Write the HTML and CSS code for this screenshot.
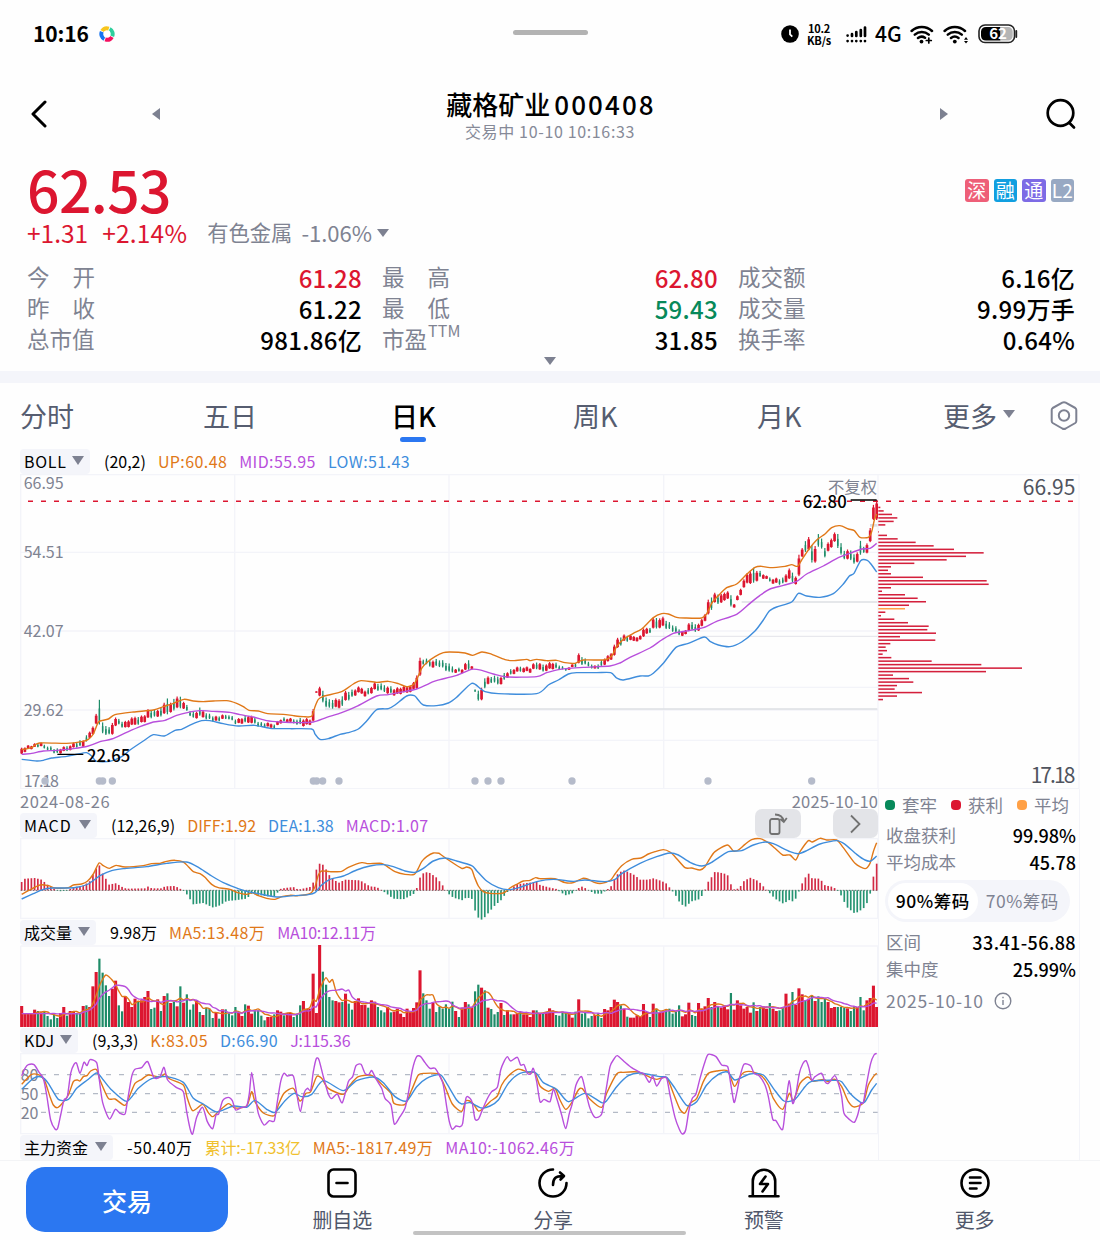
FILE: index.html
```
<!DOCTYPE html>
<html lang="zh-CN">
<head>
    <meta charset="UTF-8">
    <meta name="viewport" content="width=device-width, initial-scale=1.0">
    <title>藏格矿业 000408</title>
    <link rel="stylesheet" href="styles.css">
</head>
<body>

    <header class="status-bar">
        <span class="time">10:16</span>
        <svg class="app-dot" width="16" height="16" viewBox="-8 -8 16 16" fill="none" stroke-width="4">
            <path d="M-4.9 -2.9A5.7 5.7 0 0 1 1.8 -5.4" stroke="#f8c51c"/>
            <path d="M2.6 -5A5.7 5.7 0 0 1 5.2 2.3" stroke="#2fcf9d"/>
            <path d="M4.9 2.9A5.7 5.7 0 0 1 -1.8 5.4" stroke="#f5105f"/>
            <path d="M-2.6 5A5.7 5.7 0 0 1 -5.2 -2.3" stroke="#1673f0"/>
            <path d="M-2.5 -3L2.8 -3.2L3 2.5L-2.6 3.3Z" fill="#fff" stroke="none"/>
        </svg>
        <span class="notch"></span>
        <div class="status-icons">
            <svg width="18" height="18" viewBox="0 0 18 18">
                <circle cx="9" cy="9" r="8.8"/>
                <path d="M9 4.5V9.3L11.3 11.6" fill="none" stroke="#fff" stroke-width="1.8"/>
            </svg>
            <span class="speed">10.2<br>KB/s</span>
            <svg class="signal" width="21" height="17" viewBox="0 0 21 17">
                <g stroke="#000" stroke-width="2.7" stroke-linecap="round">
                    <path d="M1.6 9.5V9.6M6 8.2V10M10.3 6V10M14.8 4V10M19 1.6V10"/>
                    <path d="M1.6 15V15.1M6 15V15.1M10.3 15V15.1M14.8 15V15.1M19 15V15.1"/>
                </g>
            </svg>
            <span class="network">4G</span>
            <svg class="wifi" width="24" height="19" viewBox="0 0 24 19" fill="none" stroke="#000" stroke-width="2.5" stroke-linecap="round">
                <path d="M1.6 6A15 15 0 0 1 22 6M4.8 9.6A10.5 10.5 0 0 1 18.8 9.6M8 13A6 6 0 0 1 15 12.8"/>
                <circle cx="11.5" cy="16.6" r="1.9" fill="#000" stroke="none"/>
                <path d="M18.8 13V18M16.3 15.5H21.3" stroke-width="1.7"/>
            </svg>
            <svg class="wifi" width="26" height="19" viewBox="0 0 26 19" fill="none" stroke="#000" stroke-width="2.5" stroke-linecap="round">
                <path d="M1.6 6A15 15 0 0 1 22 6M4.8 9.6A10.5 10.5 0 0 1 18.8 9.6M8 13A6 6 0 0 1 15.5 13"/>
                <circle cx="11.8" cy="16.6" r="1.9" fill="#000" stroke="none"/>
                <path d="M23 12L25 14.7H21ZM23 18.6L25 16H21Z" fill="#000" stroke="none"/>
            </svg>
            <svg class="battery" width="40" height="20" viewBox="0 0 40 20">
                <rect x="1" y="1" width="35.5" height="17.5" rx="6" fill="#fff" stroke="#222" stroke-width="1.6"/>
                <path d="M8 3H22.5V16.5H8A5 5 0 0 1 3 12V7.5A5 5 0 0 1 8 3Z"/>
                <path d="M22.5 3H30A4.5 4.5 0 0 1 34.7 7.5V12A4.5 4.5 0 0 1 30 16.5H22.5Z" fill="#b5b5b5"/>
                <path d="M38.3 7V13" stroke="#222" stroke-width="1.8" stroke-linecap="round"/>
                <text x="20" y="15" class="battery-text">62</text>
            </svg>
        </div>
    </header>

    <nav class="title-bar">
        <svg class="back" width="18" height="28" viewBox="0 0 18 28"><path d="M15 2L3 14L15 26"/></svg>
        <i class="tri-left"></i>
        <div class="title">
            <h1>藏格矿业<b>000408</b></h1>
            <p>交易中 10-10 10:16:33</p>
        </div>
        <i class="tri-right"></i>
        <svg class="search" width="32" height="32" viewBox="0 0 32 32"><circle cx="15.5" cy="15" r="12.8"/><path d="M24.5 25L29 29.5"/></svg>
    </nav>

    <section class="quote">
        <div class="price-row">
            <span class="price">62.53</span>
            <div class="badges">
                <span class="badge shen">深</span>
                <span class="badge rong">融</span>
                <span class="badge tong">通</span>
                <span class="badge l2">L2</span>
            </div>
        </div>
        <div class="change-row">
            <span class="red">+1.31</span>
            <span class="red pct">+2.14%</span>
            <span class="industry">有色金属</span>
            <span class="industry-pct">-1.06%</span>
            <i class="tri-down"></i>
        </div>
        <div class="stats">
            <div><label>今<s></s>开</label><span class="red">61.28</span></div>
            <div><label>最<s></s>高</label><span class="red">62.80</span></div>
            <div><label>成交额</label><span>6.16亿</span></div>
            <div><label>昨<s></s>收</label><span>61.22</span></div>
            <div><label>最<s></s>低</label><span class="green">59.43</span></div>
            <div><label>成交量</label><span>9.99万手</span></div>
            <div><label>总市值</label><span>981.86亿</span></div>
            <div><label>市盈<sup>TTM</sup></label><span>31.85</span></div>
            <div><label>换手率</label><span>0.64%</span></div>
        </div>
        <i class="tri-down expand"></i>
    </section>

    <div class="tabs">
        <span>分时</span>
        <span>五日</span>
        <span class="active">日K</span>
        <span>周K</span>
        <span>月K</span>
        <span class="more">更多<i class="tri-down"></i></span>
        <svg class="settings" width="30" height="32" viewBox="0 0 30 32"><path d="M13.3 2.7Q15 1.8 16.7 2.7L26.3 8Q27.3 8.7 27.3 10V21Q27.3 22.3 26.3 23L16.7 28.5Q15 29.4 13.3 28.5L3.7 23Q2.7 22.3 2.7 21V10Q2.7 8.7 3.7 8Z"/><circle cx="15" cy="15.5" r="5.2"/></svg>
    </div>

    <main class="charts">
        <div class="indicator">
            <span class="select boll">BOLL<i class="tri-down"></i></span>
            <span class="param">(20,2)</span>
            <span class="orange loose">UP:60.48</span>
            <span class="purple loose">MID:55.95</span>
            <span class="blue loose">LOW:51.43</span>
        </div>

        <svg class="kline" id="kline" viewBox="60 282 3180 945">
            <g class="grid">
                <path d="M62 284H3237V1226H62ZM704 284V1226M1347 284V1226M1991 284V1226M2634 284V1226"/>
                <path d="M62 517H2634M62 753H2634M62 990H2634M300 1081H2634M1420 922H2634"/>
            </g>
            <g class="gaps">
                <path d="M975 987H2632M2225 666H2632" stroke-width="4.5"/>
                <path d="M1930 769H2632" stroke-width="2.5"/>
                <path d="M2610 436H2632" stroke-width="8"/>
            </g>
            <g class="axis">
                <text x="71" y="328">66.95</text>
                <text x="71" y="534">54.51</text>
                <text x="71" y="771">42.07</text>
                <text x="71" y="1008">29.62</text>
                <text x="71" y="1221" textLength="106">17.18</text>
            </g>
            <g id="events" class="events"></g>
            <g id="candles"></g>
            <g id="boll"></g>
            <path class="last-price" d="M84 364H3222"/>
            <g id="chips"></g>
            <text class="adjust" x="2631" y="339">不复权</text>
            <path class="pointer" d="M2552 360H2630M172 1123H250"/>
            <text class="extreme" x="2408" y="383" textLength="132">62.80</text>
            <text class="extreme" x="261" y="1146" textLength="130">22.65</text>
            <text class="range" x="3226" y="345">66.95</text>
            <text class="range" x="3226" y="1209" textLength="134">17.18</text>
        </svg>

        <div class="lower">
            <div class="left">
                <div class="dates"><span>2024-08-26</span><span class="end">2025-10-10</span></div>
                <div class="indicator macd-row">
                    <span class="select macd">MACD<i class="tri-down"></i></span>
                    <span class="param">(12,26,9)</span>
                    <span class="orange">DIFF:1.92</span>
                    <span class="blue">DEA:1.38</span>
                    <span class="purple loose">MACD:1.07</span>
                    <div class="tools">
                        <button>
                            <svg width="20" height="22" viewBox="0 0 20 22"><rect x="2" y="6" width="9.5" height="15" rx="2"/><path d="M7 1.5C12 1.5 15 4 15.8 8.5M12.3 6L15.8 9L18.8 5"/></svg>
                        </button>
                        <button>
                            <svg width="14" height="20" viewBox="0 0 14 20"><path d="M3 1.5L11.5 10L3 18.5"/></svg>
                        </button>
                    </div>
                </div>
                <svg class="pane pane-macd" viewBox="60 114 2574 243">
                    <path class="grid" d="M62 116H2633V355H62ZM704 116V355M1347 116V355M1991 116V355"/>
                    <path class="zero" d="M62 271H2633"/>
                    <g id="macd"></g>
                </svg>

                <div class="indicator">
                    <span class="select vol">成交量<i class="tri-down"></i></span>
                    <span class="param">9.98万</span>
                    <span class="orange loose">MA5:13.48万</span>
                    <span class="purple tight">MA10:12.11万</span>
                </div>
                <svg class="pane pane-vol" viewBox="60 435 2574 246">
                    <path class="grid" d="M62 438H2633V681M62 438V681M704 438V681M1347 438V681M1991 438V681"/>
                    <g id="volume"></g>
                </svg>

                <div class="indicator">
                    <span class="select kdj">KDJ<i class="tri-down"></i></span>
                    <span class="param">(9,3,3)</span>
                    <span class="orange loose">K:83.05</span>
                    <span class="blue loose">D:66.90</span>
                    <span class="purple tight">J:115.36</span>
                </div>
                <svg class="pane pane-kdj" viewBox="60 69 2574 243">
                    <path class="grid" d="M62 71H2633V311H62ZM704 71V311M1347 71V311M1991 71V311"/>
                    <path class="levels" d="M123 134H2633M123 191H2633M123 247H2633"/>
                    <g class="axis">
                        <text x="62" y="154">80</text>
                        <text x="62" y="209">50</text>
                        <text x="62" y="266">20</text>
                    </g>
                    <g id="kdj"></g>
                </svg>

                <div class="indicator">
                    <span class="select fund">主力资金<i class="tri-down"></i></span>
                    <span class="param looser">-50.40万</span>
                    <span class="yellow tight">累计:-17.33亿</span>
                    <span class="orange loose">MA5:-1817.49万</span>
                    <span class="purple loose">MA10:-1062.46万</span>
                </div>
            </div>

            <aside class="chips">
                <div class="legend">
                    <span class="k-green">套牢</span>
                    <span class="k-red">获利</span>
                    <span class="k-orange">平均</span>
                </div>
                <div class="line"><span>收盘获利</span><b>99.98%</b></div>
                <div class="line"><span>平均成本</span><b>45.78</b></div>
                <div class="toggle"><span class="on">90%筹码</span><span>70%筹码</span></div>
                <div class="line"><span>区间</span><b class="span">33.41-56.88</b></div>
                <div class="line"><span>集中度</span><b>25.99%</b></div>
                <div class="chip-date">2025-10-10
                    <svg width="18" height="18" viewBox="0 0 18 18"><circle cx="9" cy="9" r="7.8"/><path d="M9 8V13M9 4.8V6.2"/></svg>
                </div>
            </aside>
        </div>
    </main>

    <footer class="bottom-bar">
        <button class="trade">交易</button>
        <div class="actions">
            <div>
                <svg width="32" height="32" viewBox="0 0 32 32"><rect x="2.5" y="2.5" width="27" height="27" rx="5"/><path d="M10.5 16H21.5"/></svg>
                <span>删自选</span>
            </div>
            <div>
                <svg width="32" height="32" viewBox="0 0 32 32"><path d="M16 2.5A13.5 13.5 0 1 0 29.5 16M16 18C16 11.5 18.5 9 26 9M23 5.5L27 9L23.5 12.5"/></svg>
                <span>分享</span>
            </div>
            <div>
                <svg width="32" height="32" viewBox="0 0 32 32"><path d="M1.5 29.3H30.5M4.8 29V14A11.2 11.2 0 0 1 27.2 14V29M17.5 9.5L12 17H20L14.5 24.5"/></svg>
                <span>预警</span>
            </div>
            <div>
                <svg width="32" height="32" viewBox="0 0 32 32"><circle cx="16" cy="16" r="13.5"/><path d="M11 10.5H21.5M11 16H21.5M11 21.5H17.5"/></svg>
                <span>更多</span>
            </div>
        </div>
        <span class="home-bar"></span>
    </footer>

    <script src="script.js"></script>
</body>
</html>
```
FILE: styles.css
```
* {
    box-sizing: border-box;
}
body {
    margin: 0;
    width: 1100px;
    height: 1240px;
    overflow: hidden;
    display: flex;
    flex-direction: column;
    position: relative;
    background: #fefefe;
    color: #000;
    font-family: "Noto Sans CJK SC", "Noto Sans", sans-serif;
    line-height: 1;
}
h1, p {
    margin: 0;
}
button {
    border: none;
    padding: 0;
    font-family: inherit;
}
.red { color: #dc1630; }
.green { color: #07895a; }
.orange { color: #e07818; }
.purple { color: #b84fdc; }
.blue { color: #3f8ddc; }
.yellow { color: #f0c02c; }

/* small triangles */
.tri-down {
    display: inline-block;
    border: 6px solid transparent;
    border-top: 8px solid #7d8191;
    border-bottom: 0;
}
.tri-left, .tri-right {
    border: 6px solid transparent;
}
.tri-left {
    border-right: 8px solid #7d8191;
    border-left: 0;
    margin-left: 104px;
}
.tri-right {
    border-left: 8px solid #7d8191;
    border-right: 0;
    margin-right: 97px;
}

/* Status bar */
.status-bar {
    height: 68px;
    padding: 0 82px 0 33px;
    display: flex;
    align-items: center;
    flex: none;
}
.time {
    font-size: 21px;
    font-weight: 700;
    width: 66px;
    letter-spacing: -0.1px;
    padding-bottom: 1px;
}
.notch {
    width: 75px;
    height: 5px;
    border-radius: 3px;
    background: #b3b3b3;
    margin: -4px 0 0 398px;
}
.status-icons {
    margin-left: auto;
    display: flex;
    align-items: center;
}
.speed {
    width: 26px;
    margin: -1px 14px 0 7px;
    text-align: center;
    font-size: 11px;
    line-height: 12px;
    font-weight: 700;
    letter-spacing: -0.2px;
    white-space: nowrap;
}
.network {
    font-size: 21px;
    font-weight: 500;
    width: 28px;
    margin: -1px 7px 0 8px;
}
.wifi {
    margin-right: 9px;
}
.battery-text {
    font-size: 15px;
    font-weight: 700;
    fill: #fff;
    text-anchor: middle;
}

/* Title */
.title-bar {
    height: 92px;
    padding: 0 23px 0 30px;
    display: flex;
    align-items: center;
    flex: none;
}
.back path, .search {
    fill: none;
    stroke: #000;
    stroke-width: 3;
    stroke-linecap: round;
    stroke-linejoin: round;
}
.search {
    stroke-width: 2.7;
}
.title {
    flex: 1;
    text-align: center;
    padding-top: 4px;
}
.title h1 {
    font-size: 26px;
    line-height: 30px;
    font-weight: 500;
}
.title b {
    font-weight: 500;
    font-size: 26px;
    letter-spacing: 2.1px;
    margin: 0 -2px 0 4px;
}
.title p {
    font-size: 16px;
    line-height: 24px;
    letter-spacing: 0.65px;
    color: #868a98;
}

/* Quote */
.quote {
    height: 211px;
    padding: 0 26px 0 27px;
    flex: none;
    position: relative;
}
.price-row {
    height: 60px;
    display: flex;
    align-items: center;
    justify-content: space-between;
}
.price {
    font-size: 57px;
    line-height: 54px;
    letter-spacing: -0.6px;
    font-weight: 500;
    color: #dc1630;
    padding-bottom: 5px;
}
.badges {
    display: flex;
    gap: 5px;
}
.badge {
    width: 23.5px;
    height: 23px;
    border-radius: 3px;
    color: #fff;
    font-size: 19px;
    line-height: 21px;
    text-align: center;
}
.shen { background: #ee5f78; }
.rong { background: #119fe0; }
.tong { background: #7d6be5; }
.l2 { background: #98a9c3; }
.change-row {
    height: 28px;
    padding-bottom: 2px;
    display: flex;
    align-items: center;
    font-size: 24.5px;
}
.pct {
    margin-left: 14px;
    letter-spacing: 0.2px;
}
.industry {
    font-size: 21.3px;
    color: #7f8392;
    margin: -2px 0 0 20px;
}
.industry-pct {
    font-size: 22px;
    color: #7f8392;
    margin: -2px 5px 0 9px;
}
.stats {
    margin-top: 14px;
    display: grid;
    grid-template-columns: 335px 336px 337px;
    column-gap: 20px;
    grid-auto-rows: 31px;
}
.stats div {
    display: flex;
    justify-content: space-between;
    align-items: center;
}
.stats label {
    font-size: 22.5px;
    color: #7f8392;
    margin-top: -2px;
}
.stats s {
    display: inline-block;
    width: 23px;
}
.stats sup {
    font-size: 16px;
    line-height: 0;
    vertical-align: 11px;
    letter-spacing: 0.2px;
    margin-left: 1px;
}
.stats span {
    font-size: 24px;
    font-weight: 500;
    letter-spacing: 0.3px;
}
.expand {
    position: absolute;
    left: 544px;
    bottom: 6px;
}

/* Period tabs */
.tabs {
    height: 78px;
    border-top: 12px solid #f4f5fa;
    padding: 0 0 2px 20px;
    display: grid;
    grid-template-columns: 183px 188px 182px 184px 186px 106px 30px;
    align-items: center;
    flex: none;
    font-size: 27px;
    color: #565d70;
}
.tabs .active {
    color: #000;
    font-weight: 500;
    position: relative;
}
.active::after {
    content: "";
    position: absolute;
    left: 9px;
    bottom: -13px;
    width: 26px;
    height: 5px;
    border-radius: 3px;
    background: #2b77f1;
}
.more .tri-down {
    margin: 0 0 0 6px;
    vertical-align: 9px;
}
.settings {
    fill: none;
    stroke: #7d8191;
    stroke-width: 2;
    stroke-linejoin: round;
    margin-top: 1px;
}

/* Charts */
.charts {
    padding-left: 20px;
    height: 711px;
    flex: none;
    overflow: hidden;
}
svg {
    display: block;
}
.indicator {
    height: 25px;
    display: flex;
    align-items: center;
    font-size: 16px;
    line-height: 25px;
    white-space: nowrap;
    position: relative;
}
.indicator span {
    margin-right: 12px;
}
.indicator .loose {
    letter-spacing: 0.4px;
}
.indicator .looser {
    letter-spacing: 0.6px;
}
.indicator .tight {
    letter-spacing: -0.2px;
}
.indicator .select {
    background: #f4f5fa;
    border-radius: 4px;
    height: 25px;
    padding: 0 6px 0 4px;
    margin-right: 14px;
    display: flex;
    align-items: center;
    justify-content: space-between;
}
.select .tri-down {
    margin-bottom: 3px;
    border-top-width: 9px;
}
.select.boll { width: 70px; letter-spacing: 0.7px; }
.select.macd { width: 77px; letter-spacing: 1px; }
.select.vol { width: 76px; }
.select.kdj { width: 58px; letter-spacing: 0.4px; }
.select.fund { width: 93px; }
.kline {
    width: 1060px;
    height: 315px;
}
.grid {
    fill: none;
    stroke: #f3f4f9;
    stroke-width: 4;
}
.gaps {
    stroke: #dddfe4;
}
.axis text {
    font-size: 48px;
    fill: #7f8392;
}
.last-price {
    stroke: #dc1630;
    stroke-width: 4.5;
    stroke-dasharray: 15 24;
}
.events {
    fill: #b5bbca;
}
.adjust {
    font-size: 49px;
    fill: #7f8392;
    text-anchor: end;
}
.pointer {
    stroke: #000;
    stroke-width: 4;
}
.extreme {
    font-size: 50px;
    font-weight: 500;
}
.range {
    font-size: 63px;
    fill: #50545e;
    text-anchor: end;
}
.lower {
    display: flex;
}
.left {
    width: 858px;
}
.dates {
    height: 24px;
    padding-top: 4px;
    display: flex;
    justify-content: space-between;
    font-size: 16.5px;
    letter-spacing: 0.55px;
    color: #7f8392;
}
.dates .end {
    letter-spacing: 0.15px;
}
.tools {
    position: absolute;
    right: 0;
    top: -4px;
    display: flex;
    gap: 32px;
}
.tools button {
    width: 45.5px;
    height: 29px;
    border-radius: 7px;
    background: rgba(222, 223, 228, 0.85);
    display: flex;
    align-items: center;
    justify-content: center;
}
.tools svg {
    fill: none;
    stroke: #727272;
    stroke-width: 1.8;
}
.pane {
    width: 858px;
    overflow: visible;
}
.pane-macd {
    height: 81px;
    margin-bottom: 1px;
}
.pane-vol {
    height: 82px;
    margin-bottom: 1px;
}
.pane-kdj {
    height: 81px;
    margin-bottom: 1px;
}
.zero {
    stroke: #444;
    stroke-width: 2.5;
    stroke-dasharray: 5 4;
}
.levels {
    stroke: #b4bac6;
    stroke-width: 4;
    stroke-dasharray: 15 24;
}

/* Chip distribution */
.chips {
    width: 202px;
    height: 371px;
    padding: 0 3px 0 7px;
    border-left: 1px solid #f3f4f9;
    border-right: 1px solid #f3f4f9;
    font-size: 17.5px;
    color: #7f8392;
}
.legend {
    height: 32px;
    display: flex;
    align-items: center;
    gap: 15px;
}
.legend span::before {
    content: "";
    display: inline-block;
    width: 10px;
    height: 10px;
    border-radius: 4px;
    margin: 0 7px 2px -1px;
}
.legend .k-green::before { background: #07895a; }
.legend .k-red::before { background: #dc1630; }
.legend .k-orange::before { background: #ffa046; }
.line {
    height: 27px;
    display: flex;
    align-items: center;
    justify-content: space-between;
}
.line b {
    color: #000;
    font-weight: 500;
    font-size: 18px;
}
.line .span {
    letter-spacing: 0.4px;
}
.toggle {
    width: 185px;
    height: 42px;
    margin: 5px 0 6px -1px;
    padding: 3px;
    border-radius: 21px;
    background: #f4f5fa;
    display: flex;
}
.toggle span {
    width: 90px;
    height: 36px;
    line-height: 36px;
    letter-spacing: 0.5px;
    text-align: center;
    border-radius: 18px;
}
.toggle .on {
    background: #fff;
    color: #000;
    font-weight: 500;
}
.chip-date {
    height: 37px;
    display: flex;
    align-items: center;
    gap: 10px;
    letter-spacing: 0.8px;
}
.chip-date svg {
    fill: none;
    stroke: #7f8392;
    stroke-width: 1.4;
}

/* Bottom bar */
.bottom-bar {
    height: 80px;
    border-top: 1px solid #f3f4f6;
    padding: 6px 20px 0 26px;
    display: flex;
    position: relative;
}
.trade {
    width: 202px;
    height: 65px;
    border-radius: 19px;
    background: #2b77f1;
    color: #fff;
    font-size: 25px;
    font-weight: 500;
}
.actions {
    flex: 1;
    margin-left: 9px;
    display: flex;
}
.actions div {
    flex: 1;
    display: flex;
    flex-direction: column;
    align-items: center;
}
.actions svg {
    fill: none;
    stroke: #000;
    stroke-width: 2.6;
    stroke-linecap: round;
    stroke-linejoin: round;
}
.actions span {
    font-size: 20px;
    line-height: 24px;
    margin-top: 9px;
    color: #50576b;
}
.home-bar {
    position: absolute;
    left: 413px;
    bottom: 5px;
    width: 273px;
    height: 4px;
    border-radius: 2px;
    background: #c2c2c2;
}
```
FILE: script.js
```
const NS = "http://www.w3.org/2000/svg";
const COLORS = { r: "#dc1630", g: "#1e8c68", orange: "#e07818", purple: "#b84fdc", blue: "#3f8ddc" };
const HALF = 1320;

function add(parent, tag, attrs) {
    const el = document.createElementNS(NS, tag);
    for (const key in attrs) el.setAttribute(key, attrs[key]);
    document.getElementById(parent).appendChild(el);
}

// "x,y x,y ..." -> [[x, y], ...], optionally moved to the right half of the pane
function parse(text, dx = 0) {
    return text.trim().split(/\s+/).map(p => {
        const v = p.split(",").map(Number);
        v[0] += dx;
        return v;
    });
}

function both(left, right) {
    const b = parse(right, HALF);
    return parse(left).filter(p => p[0] < b[0][0]).concat(b);
}

// smooth path through the points, tension kept low
function line(parent, pts, color, width = 4.2) {
    let d = `M${pts[0][0]} ${pts[0][1]}`;
    for (let i = 1; i < pts.length; i++) {
        const a = pts[i - 2] || pts[i - 1], b = pts[i - 1], c = pts[i], e = pts[i + 1] || c;
        d += `C${b[0] + (c[0] - a[0]) / 8} ${b[1] + (c[1] - a[1]) / 8} ${c[0] - (e[0] - b[0]) / 8} ${c[1] - (e[1] - b[1]) / 8} ${c[0]} ${c[1]}`;
    }
    add(parent, "path", { d, fill: "none", stroke: COLORS[color], "stroke-width": width, "stroke-linejoin": "round" });
}

function at(pts, x, col = 1) {
    if (x <= pts[0][0]) return pts[0][col];
    for (let i = 1; i < pts.length; i++) {
        if (x <= pts[i][0]) {
            const t = (x - pts[i - 1][0]) / (pts[i][0] - pts[i - 1][0]);
            return pts[i - 1][col] + t * (pts[i][col] - pts[i - 1][col]);
        }
    }
    return pts[pts.length - 1][col];
}

/* Volume: bar height + up/down for each trading day */
const volume = `63r 41r 41r 41r 52r 48g 44r 48g 33g 23g 37g 27g 42r 60r 34g 48r 48r 42g 42g 63r 65g 60r 122r 165r 205g 163g 125g 93g 115r 139r
65g 47g 92r 75r 60r 85r 75g 80r 90r 108r 54g 58g 83r 48g 93r 101g 72r 75g 62r 122g 73r 98g 52g 68g 80r 45g 36r 58g 55g 27g
43r 25g 53r 53g 41g 35g 60g 42r 33r 68g 64r 40r 50g 50g 34g 20g 30r 30r 38g 50r 46r 35g 42r 42r 30g 40g 65g 78r 55r 55r
160r 42r 246r 166g 127g 90g 80g 78r 74r 75g 100r 70g 52g 78r 86r 66r 66r 58g 80r 76r 60g 50g 44g 60r 44g 46r 55r 40r 30r 55r
45r 57r 74r 170r 101g 80g 55g 73r 45g 60g 55g 68g 55g 76g 48r 30g 58r 75r 68g 60r 107g 127g 118r 110g 58r 54g 38g 45g 72r 36g
50r 38g 38r 40r 45g 38r 38r 30r 50r 50g 40r 42g 45r 56r 50r 36g 34g 46g 42g 40r 28r 46g 83r 40g 42g 26g 33g 36r 40g 27g
54r 50r 60r 82r 75r 65g 55r 31g 28r 28r 35r 30r 69r 45r 30g 70r 55g 42r 46r 50g 55g 40g 45g 65g 32r 38r 73r 36g 33g 72r
55r 62r 87r 60g 75r 60g 58r 64r 53r 102g 52r 80r 65r 55r 60r 43r 74g 48r 60g 62r 55r 72g 55r 48r 50g 60g 100r 70r 105g 66r
116r 98r 80g 85r 95g 78r 92g 75g 85g 75r 57r 60r 60g 60g 58g 56r 48g 62g 60r 90g 50g 80r 87r 124r 60r`
    .split(/\s+/).map(v => ({ h: parseInt(v), c: v.slice(-1) }));
const STEP = 2565 / (volume.length - 1);
const barX = i => 65 + i * STEP;

volume.forEach((v, i) => {
    const w = v.c === "r" ? 9.2 : 6.6;
    add("volume", "rect", { x: barX(i) - w / 2, y: 681 - v.h, width: w, height: v.h, fill: COLORS[v.c] });
});
function average(n) {
    return volume.map((v, i) => {
        const part = volume.slice(Math.max(0, i - n + 1), i + 1);
        return [barX(i), 681 - (i < n ? 40 : part.reduce((s, p) => s + p.h, 0) / part.length)];
    });
}
line("volume", average(5), "orange");
line("volume", average(10), "purple");

/* Candles: x, high, low */
const range = parse(`65,1103,1122 85,1097,1107 118,1088,1100 140,1097,1108 175,1108,1122 205,1097,1112 230,1085,1100 250,1080,1100
265,1062,1080 280,1035,1060 290,998,1030 298,955,1030 308,1030,1062 328,1045,1066 342,1020,1063 347,1010,1035 358,1020,1035 375,1025,1045 405,1010,1035
430,1008,1028 445,988,1015 470,992,1012 490,975,1005 502,952,1000 513,972,1000 522,955,990 541,950,985 552,965,985 570,990,1005
583,1000,1018 600,985,1010 625,1002,1018 650,1010,1025 685,1003,1015 710,1018,1032 755,1005,1028 780,1028,1040 825,1032,1045
845,1013,1025 880,1018,1030 912,1015,1037 932,1018,1034 940,988,1027 949,934,938 959,918,947 969,935,970 985,960,985 1020,957,985
1035,935,965 1060,930,950 1080,920,938 1098,932,950 1125,908,930 1150,915,935 1165,918,940 1185,925,945 1225,918,938 1245,905,928
1250,885,925 1260,835,890 1270,838,852 1295,840,862 1320,838,858 1345,852,878 1367,865,877 1386,865,877 1405,838,868 1416,862,870
1425,928,935 1435,930,960 1445,925,963 1454,892,922 1474,890,908 1500,890,915 1525,872,888 1560,860,875 1590,862,876 1607,845,865
1625,855,876 1660,845,865 1695,866,873 1725,850,860 1736,822,852 1760,842,857 1785,858,868 1810,837,857 1832,823,842 1843,792,825
1853,775,805 1870,765,785 1920,770,782 1930,742,768 1948,748,760 1960,715,748 1990,712,740 2010,730,750 2040,750,767 2057,752,765
2067,725,750 2095,735,757 2115,700,722 2125,660,705 2143,640,670 2165,645,672 2182,630,652 2193,648,682 2203,670,680 2222,625,645
2240,580,610 2261,565,610 2281,575,592 2300,590,600 2320,595,610 2348,595,612 2368,568,600 2387,588,612 2397,525,590 2407,500,525
2426,470,510 2436,500,552 2446,498,548 2455,460,498 2465,478,508 2475,502,530 2485,488,515 2504,460,488 2514,462,505 2533,515,540
2543,505,535 2562,522,550 2572,520,550 2580,480,525 2592,502,518 2601,490,520 2611,442,485 2620,375,420 2630,360,420`);
volume.forEach((v, i) => {
    const x = barX(i), top = at(range, x), low = at(range, x, 2);
    const shift = i > 258 ? 0 : [0, 2, -2, 3, -2, 1, -3][i % 7];
    const len = low - top, body = len * (v.c === "r" ? 0.75 : 0.5);
    add("candles", "rect", { x: x - 1.8, y: top + shift, width: 3.6, height: len, fill: COLORS[v.c] });
    const w = v.c === "r" ? 8 : 4.5;
    add("candles", "rect", { x: x - w / 2, y: top + shift + (len - body) * 0.7, width: w, height: body, fill: COLORS[v.c] });
});

line("boll", parse(`65,1109 95,1103 118,1089 200,1090 245,1085 265,1078 280,1062 293,1030 300,1023 325,1017 345,1004 400,996 460,990
490,980 520,970 552,958 580,963 610,965 640,963 680,962 710,970 730,980 747,991 775,993 803,1001 850,1003 880,1007 910,1010 935,1009
945,980 955,958 970,949 1025,935 1060,912 1083,902 1130,907 1165,904 1195,911 1220,920 1240,914 1252,895 1265,865 1280,848 1305,830
1330,818 1350,816 1395,819 1418,826 1445,816 1470,821 1515,839 1540,842 1580,838 1590,842 1610,838 1640,842 1670,841 1695,848
1725,850 1750,840 1810,840 1830,833 1840,820 1850,800 1870,778 1900,760 1925,747 1960,713 1985,701 2005,702 2030,712 2055,714
2105,714 2120,702 2135,670 2155,647 2180,623 2210,612 2240,583 2265,562 2285,559 2310,563 2355,559 2375,554 2393,559 2405,540
2425,510 2450,480 2475,462 2495,443 2520,437 2545,447 2563,452 2580,472 2605,472 2615,455 2623,420 2630,402`), "orange");
line("boll", parse(`65,1123 95,1120 130,1113 170,1111 220,1106 265,1098 300,1085 335,1077 380,1057 420,1040 460,1026 495,1021 530,1006
565,997 600,992 640,994 690,997 720,1004 760,1011 800,1022 840,1026 900,1028 940,1026 980,1012 1025,998 1070,979 1130,948 1165,944
1200,937 1250,927 1300,905 1320,899 1370,886 1415,868 1445,871 1480,882 1520,891 1610,890 1640,878 1680,868 1750,862 1830,858
1860,849 1890,832 1950,804 1985,780 2020,760 2060,753 2110,743 2150,724 2210,703 2250,670 2280,646 2310,627 2350,616 2390,604
2420,582 2470,558 2515,533 2560,516 2585,507 2610,505 2630,490`), "purple");
line("boll", parse(`65,1138 110,1143 130,1141 155,1134 200,1129 245,1120 260,1118 275,1128 290,1144 330,1144 365,1130 390,1110 430,1083
460,1064 493,1068 525,1051 545,1048 575,1033 605,1022 630,1022 670,1031 715,1038 765,1036 810,1045 870,1046 935,1047 945,1062
960,1078 985,1076 1020,1063 1045,1058 1075,1047 1100,1023 1130,989 1165,986 1185,975 1220,948 1243,947 1255,960 1270,975 1310,977
1345,969 1370,952 1415,910 1440,925 1455,935 1495,941 1610,941 1645,915 1675,900 1705,882 1730,878 1790,878 1832,878 1850,894
1870,900 1920,888 1945,888 1960,880 1990,850 2028,802 2065,790 2113,771 2130,784 2155,795 2190,800 2225,786 2265,753 2290,720
2308,693 2330,681 2375,666 2395,640 2420,648 2460,652 2500,641 2530,612 2548,588 2562,580 2582,542 2602,541 2615,555 2630,576`), "blue");

[135, 298, 308, 337, 940, 950, 968, 1017, 1425, 1464, 1503, 1716, 2124, 2435].forEach(x => {
    add("events", "circle", { cx: x, cy: 1203, r: 11 });
});

/* Chip distribution, price from high to low */
const AVG_ROW = 29;
[6, 16, 41, 57, 46, 21, 0, 2, 26, 58, 112, 166, 227, 316, 263, 205, 108, 38, 29, 38, 134, 325, 331, 38, 11, 80, 118, 143, 92, 80,
    21, 8, 48, 89, 151, 147, 173, 65, 171, 36, 22, 26, 13, 39, 160, 309, 431, 323, 44, 92, 105, 56, 49, 131, 56, 14].forEach((w, i) => {
    add("chips", "rect", { x: 2635, y: 380 + i * 10.48, width: w, height: 4.6, fill: i === AVG_ROW ? "#ffa046" : "#d4203c" });
});

/* MACD */
const hist = both(`65,25 75,35 105,37 125,32 145,15 165,3 175,-3 205,-1 215,8 250,14 270,28 280,50 290,68 298,75 308,50 318,34 328,16
345,22 357,16 370,8 380,5 435,6 445,12 455,6 485,6 495,12 525,13 540,5 552,-2 562,-14 580,-42 610,-38 640,-52 660,-45 680,-32
705,-30 740,-25 755,-10 800,-18 825,-18 840,4 855,7 880,10 895,2 930,10 940,24 948,60 960,82 970,76 980,60 990,42 1015,22 1035,32
1080,30 1110,12 1130,10 1150,-3 1180,-25 1210,-27 1240,-12 1252,10 1262,45 1275,55 1290,52 1310,38`,
`8,15 25,-10 40,-22 68,-30 78,-22 95,-24 105,-60 115,-82 125,-88 135,-80 145,-68 165,-45 185,-28 197,-10 212,4 230,18 260,22
290,25 300,16 330,8 350,4 362,-6 378,-15 400,-8 412,5 428,12 445,0 465,-10 485,-10 505,5 515,14 525,35 535,52 550,60 565,55
585,45 600,32 625,32 640,36 665,28 680,20 692,4 705,-12 720,-38 735,-50 755,-33 775,-28 790,-12 802,22 815,40 825,56 845,52
862,48 875,12 885,0 900,10 912,28 930,38 955,28 970,12 985,-4 1005,-25 1030,-40 1050,-28 1062,-36 1075,-8 1087,22 1098,42 1106,50
1116,36 1140,35 1155,15 1180,10 1195,-3 1205,-18 1220,-50 1245,-70 1270,-55 1283,-35 1292,-5 1300,40 1310,80`);
volume.forEach((v, i) => {
    const h = at(hist, barX(i));
    add("macd", "rect", { x: barX(i) - 2.5, y: h > 0 ? 271 - h : 271, width: 5, height: Math.abs(h), fill: h > 0 ? "#d22a45" : "#259472" });
});
line("macd", both(`65,283 85,272 120,255 145,257 165,264 205,263 220,255 245,252 262,244 280,222 297,189 310,197 328,205 348,196
375,201 430,197 455,191 480,190 500,184 525,181 550,186 565,200 580,215 600,221 615,232 635,253 655,263 690,268 710,277 740,283
757,278 775,287 800,295 825,298 845,290 870,286 895,287 930,281 945,260 955,225 965,213 990,215 1025,214 1045,202 1085,188
1105,191 1145,190 1165,202 1185,215 1215,223 1243,223 1255,205 1265,185 1280,170 1300,159 1318,160`,
`0,162 30,183 65,205 80,201 95,208 103,230 115,258 130,275 150,280 190,279 210,264 230,253 250,243 270,241 287,233 300,236
345,236 375,248 400,248 428,235 445,238 465,248 485,250 512,240 525,222 545,197 575,178 603,174 625,162 645,155 670,149 690,156
705,170 735,203 755,204 780,210 795,200 808,178 825,155 862,135 880,153 895,150 915,133 935,119 960,116 985,128 1005,145
1028,165 1050,165 1067,180 1080,155 1105,122 1117,126 1140,115 1160,120 1190,120 1210,143 1245,190 1275,206 1290,190 1300,155
1310,128`), "orange");
line("macd", both(`65,297 100,281 130,268 155,264 205,264 235,261 265,252 300,227 335,212 370,206 440,200 500,190 560,186 600,205
635,228 670,248 705,262 740,274 775,281 830,291 880,287 925,284 945,278 965,255 990,238 1030,228 1070,210 1110,198 1150,194
1180,200 1215,213 1245,217 1270,205 1300,183`,
`15,174 50,183 95,197 110,212 140,243 175,263 205,269 240,262 290,245 340,238 400,244 435,240 495,245 525,238 545,221 600,190
650,170 690,159 715,165 750,187 785,198 815,187 865,155 905,152 940,135 975,126 1000,131 1050,155 1075,161 1100,152 1140,132
1190,122 1215,133 1250,163 1275,180 1292,183 1310,168`), "blue");

/* KDJ */
line("kdj", both(`65,163 95,133 120,136 135,155 150,200 160,225 172,233 185,222 205,195 220,155 232,150 240,153 250,140 262,136
272,123 290,119 300,150 325,205 345,207 375,226 390,195 405,160 425,148 445,135 480,141 495,132 510,147 550,165 562,205 578,242
608,223 625,248 638,260 655,245 685,221 705,234 740,228 755,185 765,215 790,249 823,257 835,225 852,190 880,175 900,213 918,190
932,185 950,140 965,145 985,175 1030,193 1050,165 1075,140 1115,136 1145,163 1173,190 1182,220 1215,223 1235,180 1255,135
1275,130 1315,131`,
`0,138 15,170 37,222 65,244 78,212 97,218 115,243 130,235 150,215 172,198 185,165 205,138 232,118 250,121 270,129 285,128
300,168 325,184 345,175 360,210 377,238 395,218 415,180 427,176 450,208 485,232 500,190 530,132 550,127 595,126 630,142 650,148
680,143 700,190 720,238 735,249 750,220 770,205 790,155 805,130 830,123 863,123 883,169 900,140 912,127 935,125 965,138 985,165
1000,205 1028,238 1048,190 1060,212 1080,160 1098,143 1107,142 1120,154 1150,148 1165,155 1185,148 1205,170 1225,215 1243,231
1270,218 1285,165 1300,140 1310,130`), "orange");
line("kdj", both(`65,178 100,145 125,141 145,160 175,208 205,208 230,175 262,150 290,129 310,150 335,180 380,214 415,175 455,146
500,140 550,157 580,205 610,222 650,246 700,228 740,232 765,211 800,238 825,247 855,212 882,190 905,200 935,193 970,152 1030,182
1070,152 1120,141 1150,158 1185,200 1220,213 1250,170 1280,145`,
`0,134 20,160 50,210 65,222 90,218 125,234 150,228 175,210 205,160 240,130 285,127 310,158 350,178 385,215 435,190 485,218
500,212 530,170 565,137 600,129 660,140 680,142 705,175 740,226 770,215 800,165 835,133 863,126 885,150 930,132 970,135 1000,175
1032,213 1065,208 1095,170 1115,154 1185,151 1205,155 1230,190 1262,217 1275,215 1295,180 1310,160`), "blue");
line("kdj", both(`65,137 75,115 85,104 102,104 118,128 130,145 140,195 152,270 165,297 173,295 182,255 192,210 202,200 212,130
222,103 230,100 240,130 252,97 261,107 270,89 290,98 298,150 308,218 328,267 346,238 360,250 375,252 382,215 395,140 405,118
425,113 443,95 462,143 480,140 492,112 503,150 530,173 550,185 560,245 570,295 578,312 590,262 608,232 622,275 638,296 648,255
656,252 668,212 685,202 697,212 707,240 725,232 740,228 748,190 755,127 765,190 775,250 792,285 808,272 823,272 832,215 842,155
852,130 862,138 880,138 890,190 901,245 912,190 922,175 932,180 940,125 949,86 957,90 970,140 985,192 995,206 1012,192 1027,218
1045,155 1058,140 1068,107 1083,103 1095,130 1107,133 1115,122 1130,150 1145,175 1155,205 1173,225 1183,282 1200,260 1215,235
1225,190 1237,120 1250,80 1262,80 1275,98 1290,115 1305,115`,
`0,140 10,165 20,230 28,275 37,298 48,288 60,290 68,280 78,204 90,205 97,220 105,267 115,268 125,245 140,210 155,185 172,172
182,120 192,95 202,80 212,93 232,82 242,105 252,104 262,130 272,132 280,115 290,155 300,215 312,208 330,215 340,178 350,205
365,255 377,296 388,250 397,220 408,165 425,140 438,190 450,235 465,262 485,252 498,180 510,110 522,87 532,77 555,97 575,113
600,127 612,132 628,157 638,138 650,168 665,145 680,145 690,195 705,262 718,298 727,312 737,300 747,240 757,205 768,192 780,145
795,95 805,73 828,80 845,105 863,110 872,160 882,217 890,190 900,140 912,103 932,107 942,130 958,138 975,165 985,200 998,267
1008,272 1028,298 1038,215 1048,152 1058,220 1068,190 1078,130 1088,102 1098,92 1107,115 1115,150 1125,140 1145,130 1155,155
1165,160 1184,137 1195,160 1205,200 1212,250 1230,270 1243,277 1253,255 1262,220 1270,218 1280,160 1292,100 1302,75 1310,70`), "purple");
```
